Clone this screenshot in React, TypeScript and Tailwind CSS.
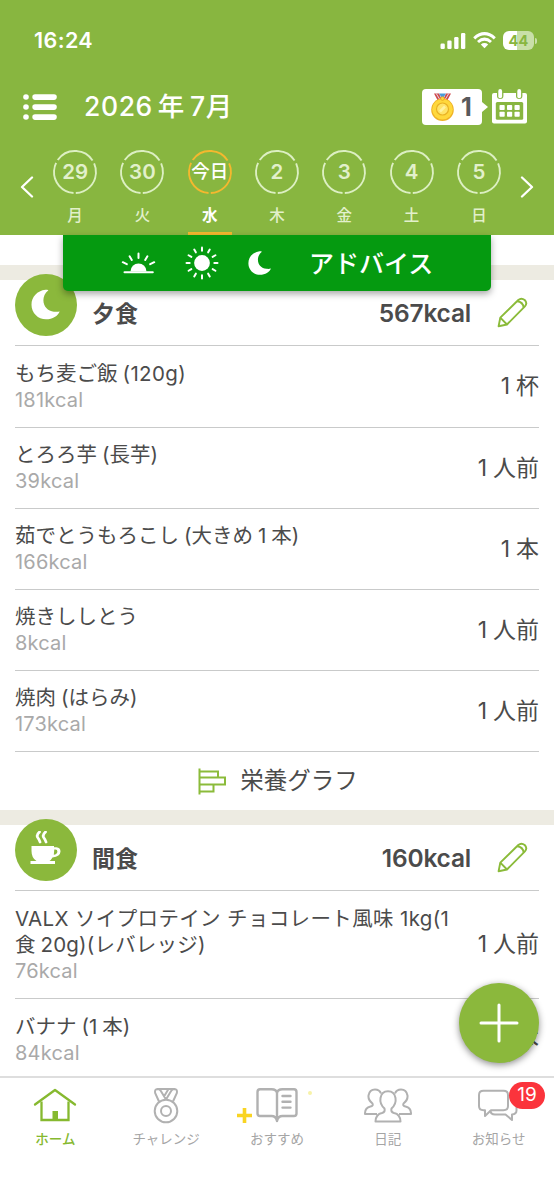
import React from 'react';

const FONT = "font-['Inter','Noto_Sans_CJK_JP',sans-serif]";

interface Food {
  name: React.ReactNode;
  kcal: string;
  amount: string;
  height: string;
}

// small gap between Japanese and latin text
const Gap: React.FC = () => <span className="inline-block w-[5px]" />;

const days = [
  { date: '29', week: '月' },
  { date: '30', week: '火' },
  { date: '今日', week: '水', active: true },
  { date: '2', week: '木' },
  { date: '3', week: '金' },
  { date: '4', week: '土' },
  { date: '5', week: '日' }
];

const dinner: Food[] = [
  { name: <>もち麦ご飯<Gap /><span className="tracking-[0.4px]">(120g)</span></>, kcal: '181kcal', amount: '杯', height: 'h-[82px]' },
  { name: <>とろろ芋<Gap />(長芋)</>, kcal: '39kcal', amount: '人前', height: 'h-[81px]' },
  { name: <>茹でとうもろこし<Gap />(大きめ<Gap />1<Gap />本)</>, kcal: '166kcal', amount: '本', height: 'h-[81px]' },
  { name: '焼きししとう', kcal: '8kcal', amount: '人前', height: 'h-[81px]' },
  { name: <>焼肉<Gap />(はらみ)</>, kcal: '173kcal', amount: '人前', height: 'h-[81px]' }
];

const snacks: Food[] = [
  {
    name: (
      <>
        <span className="tracking-[0.35px]">VALX ソイプロテイン チョコレート風味 1kg(1</span>
        <br />
        食<Gap /><span className="tracking-[0.2px]">20g)(レバレッジ)</span>
      </>
    ),
    kcal: '76kcal',
    amount: '人前',
    height: 'h-[108px]'
  },
  { name: <>バナナ<Gap />(1<Gap />本)</>, kcal: '84kcal', amount: '本', height: 'h-[82px]' }
];

const MoonIcon: React.FC<{ className: string }> = ({ className }) => (
  <svg className={className} viewBox="0 0 30 30" fill="currentColor">
    <path d="M14.5 0.3C6.2 1.2 0.5 7.6 0.5 15.2C0.5 23.4 7 29.8 15 29.8C21.6 29.8 27 26.2 28.7 21.9C26.8 22.4 24.9 22.5 23 22.2C16.8 21.4 12.4 17.2 12.4 10.8C12.4 7.4 13.8 3.6 17.4 0.8C16.3 0.3 15.4 0.2 14.5 0.3Z" />
  </svg>
);

const CupIcon: React.FC<{ className: string }> = ({ className }) => (
  <svg className={className} viewBox="0 0 32 34" fill="none">
    <path d="M1.5 15H24V16.2H26.5Q30.5 16.5 30.5 20.5Q30.3 25.6 22.5 26.5Q21 29 19.5 30H25V33H0.5V30H6.5Q1.5 27 1.5 20Z" fill="white" />
    <path d="M24.3 18.6Q27.5 18 27.4 20.8Q27 23.4 23.8 23.8Z" fill="#8bb83c" />
    <path d="M9.5 1Q5.8 4.2 8 7Q9.4 8.8 10 11M15.5 1Q11.8 4.2 14 7Q15.4 8.8 16 11" stroke="white" strokeWidth="2.8" strokeLinecap="round" />
  </svg>
);

const PencilIcon: React.FC = () => (
  <svg className="h-[31px] w-[31px]" viewBox="0 0 31 31" fill="none" stroke="#8bbb3a" strokeWidth="1.9" strokeLinejoin="round">
    <path d="M1.6 29.2L3.3 20.6L21.3 3Q24.4 0.3 27.7 3Q30.8 6.3 27.9 9.4L10 27.5Z" />
    <path d="M3.3 20.6L10 27.5M20.2 4.2Q25.9 4.8 26.7 10.5" />
  </svg>
);

const StatusBar: React.FC = () => (
  <div className="flex h-[81px] items-center justify-between pl-[34px] pr-[17px]">
    <span className="text-[21.5px] font-semibold tracking-[0.4px]">16:24</span>
    <div className="flex items-center">
      <svg className="h-4 w-[26px]" viewBox="0 0 26 16" fill="white">
        <rect x="0.5" y="10.5" width="4.3" height="5.5" rx="1.2" />
        <rect x="7.3" y="7.5" width="4.3" height="8.5" rx="1.2" />
        <rect x="14.2" y="4" width="4.3" height="12" rx="1.2" />
        <rect x="21" y="0" width="4.3" height="16" rx="1.2" />
      </svg>
      <svg className="ml-[7px] h-[17px] w-[23px]" viewBox="0 0 23 17" fill="none" stroke="white" strokeWidth="3">
        <path d="M1.2 6.3Q11.5 -3 21.8 6.3M5 10Q11.5 4.2 18 10" />
        <path d="M7.8 12.5Q11.5 9.6 15.2 12.5L11.5 16.3Z" fill="white" stroke="none" />
      </svg>
      <div className="ml-[7px] flex h-[19px] w-[31px] items-center justify-center rounded-[6px] bg-[linear-gradient(90deg,#fff_44%,#c9dfa8_44%)] text-[14.5px] font-bold tracking-[0.3px] text-[#88b640]">
        44
      </div>
      <div className="ml-px h-[6px] w-[2px] rounded-r-full bg-[#c9dfa8]" />
    </div>
  </div>
);

const MedalBadge: React.FC = () => (
  <div className="relative flex h-9 w-[60px] items-center rounded-[4px] bg-white pl-2">
    <svg className="h-[30px] w-[25px]" viewBox="0 0 25 30">
      <path d="M4 1.5H9L12 8L8 9Z" fill="#cf4a4e" />
      <path d="M21 1.5H16L13 8L17 9Z" fill="#cf4a4e" />
      <path d="M9 1.5H16L12.5 7Z" fill="#4b9bd8" />
      <path d="M6.2 1.5L9.8 7.5M18.8 1.5L15.2 7.5" stroke="#e6dce8" strokeWidth="1" />
      <circle cx="12.5" cy="17.8" r="11.3" fill="#efb225" />
      <circle cx="12.5" cy="17.3" r="10.3" fill="#ffd83c" />
      <circle cx="12.5" cy="17" r="6" fill="#ffe469" stroke="#e9b124" strokeWidth="1.2" />
      <path d="M10 19.5L15 14.5" stroke="#fff2a0" strokeWidth="2.5" />
      <circle cx="12.5" cy="6.6" r="1.8" fill="#ffd83c" stroke="#e9a91f" strokeWidth="0.8" />
    </svg>
    <span className="ml-[6px] text-[25px] leading-9 font-bold text-[#58595b]">1</span>
    <svg className="absolute top-[13px] left-full h-[10px] w-[6px]" viewBox="0 0 6 10" fill="white">
      <path d="M0 0L6 5L0 10Z" />
    </svg>
  </div>
);

const CalendarIcon: React.FC = () => (
  <svg className="h-[35px] w-[35px]" viewBox="0 0 35 35" fill="none">
    <rect x="0" y="4" width="35" height="30.5" rx="2" fill="white" />
    <rect x="3.8" y="13" width="27.4" height="17.8" rx="1.5" fill="#88b640" />
    <rect x="5" y="-2" width="6.4" height="12" rx="3.2" fill="#88b640" />
    <rect x="24" y="-2" width="6.4" height="12" rx="3.2" fill="#88b640" />
    <rect x="6.3" y="0" width="3.8" height="9.2" rx="1.9" fill="white" />
    <rect x="25.3" y="0" width="3.8" height="9.2" rx="1.9" fill="white" />
    {[7.5, 15, 22.5].map((x) => (
      <g key={x} fill="white">
        <rect x={x} y="16" width="5.2" height="5" rx="0.8" />
        <rect x={x} y="22.7" width="5.2" height="5" rx="0.8" />
      </g>
    ))}
  </svg>
);

const Header: React.FC = () => (
  <header className="relative z-10 h-[235px] shrink-0 bg-[#88b640] text-white">
    <StatusBar />
    <div className="flex h-[51px] items-center pl-[23px] pr-[27px]">
      <svg className="h-[26px] w-[34px]" viewBox="0 0 34 26" fill="white">
        {[0.2, 10.2, 20.2].map((y) => (
          <g key={y}>
            <circle cx="3" cy={y + 2.8} r="2.8" />
            <rect x="9.3" y={y} width="24.5" height="5.7" rx="2.8" />
          </g>
        ))}
      </svg>
      <h1 className="ml-[27px] flex-1 text-[26.5px] font-medium tracking-[0.6px]">
        2026<Gap />年<Gap />7月
      </h1>
      <MedalBadge />
      <div className="w-[10px]" />
      <CalendarIcon />
    </div>
    <div className="flex h-[103px] items-start justify-between px-5 pt-[18px]">
      <svg className="mt-[26px] h-[22px] w-[14px]" viewBox="0 0 14 22" fill="none" stroke="white" strokeWidth="2.3" strokeLinecap="round" strokeLinejoin="round">
        <path d="M12 1.5L2 11L12 20.5" />
      </svg>
      <div className="flex">
        {days.map((day) => (
          <div key={day.week} className={`flex w-[67.3px] flex-col items-center ${day.active ? 'text-white' : 'text-[#e2f0cb]'}`}>
            <div className="relative flex h-11 w-11 items-center justify-center">
              <svg className={`absolute inset-0 h-11 w-11 rotate-94 ${day.active ? 'text-[#f5b82e]' : 'text-[#dcefc2]'}`} viewBox="0 0 44 44" fill="none">
                <circle cx="22" cy="22" r="21" stroke="currentColor" strokeWidth="1.9" strokeDasharray="40.78 3.2" />
              </svg>
              <span className={day.active ? 'relative text-[18.5px] font-medium whitespace-nowrap' : 'relative text-[20.5px] font-semibold'}>{day.date}</span>
            </div>
            <span className={`mt-[12px] text-[15.5px] leading-5 ${day.active ? 'font-bold' : 'font-medium'}`}>{day.week}</span>
            {day.active && <div className="mt-[6px] h-[3px] w-11 bg-[#f5b82e]" />}
          </div>
        ))}
      </div>
      <svg className="mt-[26px] h-[22px] w-[14px]" viewBox="0 0 14 22" fill="none" stroke="white" strokeWidth="2.3" strokeLinecap="round" strokeLinejoin="round">
        <path d="M2 1.5L12 11L2 20.5" />
      </svg>
    </div>
    <AdviceBanner />
  </header>
);

const AdviceBanner: React.FC = () => (
  <div className="absolute top-full left-[63px] flex h-14 w-[428px] items-center rounded-b-[5px] bg-[#059a10] pl-[58px] shadow-[0_3px_7px_rgba(0,0,0,0.35)]">
    <svg className="h-[22px] w-[35px]" viewBox="0 0 35 22" fill="none" stroke="white" strokeWidth="2" strokeLinecap="round">
      <path d="M3.5 20.2H31.8" />
      <path d="M9.5 19.5A8 8 0 0 1 25.5 19.5Z" fill="white" stroke="none" />
      <path d="M17.5 1.5V6M8.6 4.3L10.8 8M26.4 4.3L24.2 8M1.8 10.2L5.8 12.2M33.2 10.2L29.2 12.2" />
    </svg>
    <svg className="ml-[29px] h-[34px] w-[34px]" viewBox="0 0 34 34" fill="none" stroke="white" strokeWidth="2" strokeLinecap="round">
      <circle cx="17" cy="17" r="7.9" fill="white" stroke="none" />
      {[0, 30, 60, 90, 120, 150, 180, 210, 240, 270, 300, 330].map((a) => (
        <path key={a} d="M17 1.5V4.7" transform={`rotate(${a} 17 17)`} />
      ))}
    </svg>
    <MoonIcon className="ml-[29px] h-6 w-6" />
    <span className="mt-[3px] ml-[37px] text-[25px] font-medium">アドバイス</span>
  </div>
);

interface MealSectionProps {
  title: string;
  total: string;
  icon: React.ReactNode;
  foods: Food[];
}

const MealSection: React.FC<MealSectionProps> = ({ title, total, icon, foods }) => (
  <section className="border-t-[15px] border-[#edebe2] px-[15px]">
    <div className="flex h-[66px] items-center border-b border-[#c9caca] font-semibold">
      <div className="-mt-4 flex h-[62px] w-[62px] items-center justify-center rounded-full bg-[#8bb83c] text-white">{icon}</div>
      <h2 className="mt-[3px] ml-[15px] flex-1 text-[23px] tracking-[-0.1px]">{title}</h2>
      <span className="mt-[2px] text-[24.5px] tracking-[-0.2px]">{total}</span>
      <div className="mr-[11px] ml-[26px]">
        <PencilIcon />
      </div>
    </div>
    {foods.map((food) => (
      <div key={food.kcal} className={`flex items-center justify-between border-b border-[#c9caca] ${food.height}`}>
        <div className="leading-[26px] whitespace-nowrap">
          <div className="text-[20.5px]">{food.name}</div>
          <div className="text-[20px] tracking-[0.2px] text-[#a9a9a9]">{food.kcal}</div>
        </div>
        <span className="text-[23px] whitespace-nowrap">
          1<span className="ml-[6px]">{food.amount}</span>
        </span>
      </div>
    ))}
  </section>
);

const tabs = [
  {
    label: 'ホーム',
    active: true,
    icon: (
      <svg className="h-9 w-12" viewBox="0 0 48 36" fill="none" stroke="currentColor" strokeWidth="2.3">
        <path d="M4 16.5L24 2L44 16.5" strokeLinecap="round" strokeLinejoin="round" />
        <path d="M10.5 13.5V32H37.5V13.5" />
        <rect x="21.5" y="23" width="5.5" height="9" fill="currentColor" stroke="none" />
      </svg>
    )
  },
  {
    label: 'チャレンジ',
    icon: (
      <svg className="h-9 w-12" viewBox="0 0 48 36" fill="none" stroke="currentColor" strokeWidth="2" strokeLinejoin="round">
        <circle cx="24" cy="23" r="11.3" />
        <circle cx="24" cy="23" r="5" />
        <path d="M17 13.5L13.1 4.8Q12.5 1.2 15.5 1Q17.5 1 18.7 2.8L24 11.5M31 13.5L34.9 4.8Q35.5 1.2 32.5 1Q30.5 1 29.3 2.8L24 11.5M15.5 1H32.5M24 11.5L18.7 2.8M22 8.5L26.5 1" />
      </svg>
    )
  },
  {
    label: 'おすすめ',
    icon: (
      <svg className="h-9 w-12" viewBox="0 0 48 36" fill="none" stroke="currentColor" strokeWidth="2.4" strokeLinejoin="round" strokeLinecap="round">
        <path d="M24 5Q23.5 1.2 18.5 1.2H7Q4.5 1.2 4.5 4V25.5Q4.5 28 7 28H18.5Q23 28 24 33Q25 28 29.5 28H41Q43.5 28 43.5 25.5V4Q43.5 1.2 41 1.2H29.5Q24.5 1.2 24 5V33" />
        <path d="M29.5 8H37.5M29.5 13.8H37.5M29.5 19.6H37.5" />
      </svg>
    )
  },
  {
    label: '日記',
    icon: (
      <svg className="h-9 w-12" viewBox="0 0 48 36" strokeWidth="2" fill="none" stroke="currentColor" strokeLinejoin="round">
        <path d="M13 26H1Q0.8 19.5 6.5 18.5Q9.5 18 8.5 15.5Q4 12 4.5 7.5Q5.5 1.5 11 1.5Q15.5 1.5 17 5.5M35 26H47Q47.2 19.5 41.5 18.5Q38.5 18 39.5 15.5Q44 12 43.5 7.5Q42.5 1.5 37 1.5Q32.5 1.5 31 5.5" />
        <path d="M11.5 33.5H36.5Q36.2 26.2 30 25Q26.5 24 27.5 20.5Q32.5 16 31.5 10Q30.5 3.3 24 3.3Q17.5 3.3 16.5 10Q15.5 16 20.5 20.5Q21.5 24 18 25Q11.8 26.2 11.5 33.5Z" />
      </svg>
    )
  },
  {
    label: 'お知らせ',
    icon: (
      <svg className="h-9 w-12" viewBox="0 0 48 36" fill="none" stroke="currentColor" strokeWidth="2" strokeLinejoin="round">
        <path d="M8.5 2.8H28.5Q33 2.8 33 7V18Q33 22.2 28.5 22.2H16L10 28V22.2H8.5Q4 22.2 4 18V7Q4 2.8 8.5 2.8Z" />
        <path d="M15.5 22.5Q15.5 26.5 20 26.5H30.5L37 32V26.5Q41.5 26 41.5 22.5V12" />
      </svg>
    )
  }
];

const TabBar: React.FC = () => (
  <nav className="relative z-10 h-[124px] shrink-0 border-t-2 border-[#dedede] bg-white">
    <div className="grid grid-cols-5">
      {tabs.map((tab) => (
        <div key={tab.label} className={`flex flex-col items-center pt-[10px] ${tab.active ? 'text-[#86b92f]' : 'text-[#b1b1b1]'}`}>
          {tab.icon}
          <span className={`mt-[5px] text-[13.5px] leading-5 ${tab.active ? 'font-medium' : 'text-[#a5a5a5]'}`}>{tab.label}</span>
        </div>
      ))}
    </div>
    <svg className="absolute top-[30px] left-[237px] h-[15px] w-[15px]" viewBox="0 0 15 15" stroke="#f9d423" strokeWidth="3.6">
      <path d="M7.5 0V15M0 7.5H15" />
    </svg>
    <div className="absolute top-[13px] left-[308px] h-1 w-1 rounded-full bg-[#f7f2a8]" />
    <div className="absolute top-1 left-[509px] flex h-[27px] w-9 items-center justify-center rounded-full bg-[#fb343c] text-[19px] text-white">19</div>
  </nav>
);

const App: React.FC = () => {
  return (
    <div className={`flex h-[1200px] w-[554px] flex-col overflow-hidden bg-white text-[#4b4b4b] ${FONT}`}>
      <Header />
      <main className="relative min-h-0 flex-1">
        <div className="h-full overflow-hidden pt-[30px]">
          <MealSection title="夕食" total="567kcal" foods={dinner} icon={<MoonIcon className="h-[31px] w-[30px]" />} />
          <div className="flex h-[58px] items-center justify-center gap-[14px] pl-[2px]">
            <svg className="h-[27px] w-[28px]" viewBox="0 0 28 27" fill="none" stroke="#8bbb3a" strokeWidth="2">
              <path d="M1.5 0.5V26.5M1.5 3.5H20V9.5M1.5 9.5H27V16.5H1.5M1.5 23.5H15.5V16.5" />
            </svg>
            <span className="text-[23.5px]">栄養グラフ</span>
          </div>
          <MealSection title="間食" total="160kcal" foods={snacks} icon={<CupIcon className="-mt-[3px] h-[34px] w-8" />} />
        </div>
        <button className="absolute right-[15px] bottom-[13px] flex h-20 w-20 items-center justify-center rounded-full bg-[#8bb83c] shadow-[0_2px_7px_rgba(0,0,0,0.45)]">
          <svg className="h-10 w-10" viewBox="0 0 40 40" stroke="white" strokeWidth="3" strokeLinecap="round">
            <path d="M20 2V38M2 20H38" />
          </svg>
        </button>
      </main>
      <TabBar />
    </div>
  );
};

export default App;
